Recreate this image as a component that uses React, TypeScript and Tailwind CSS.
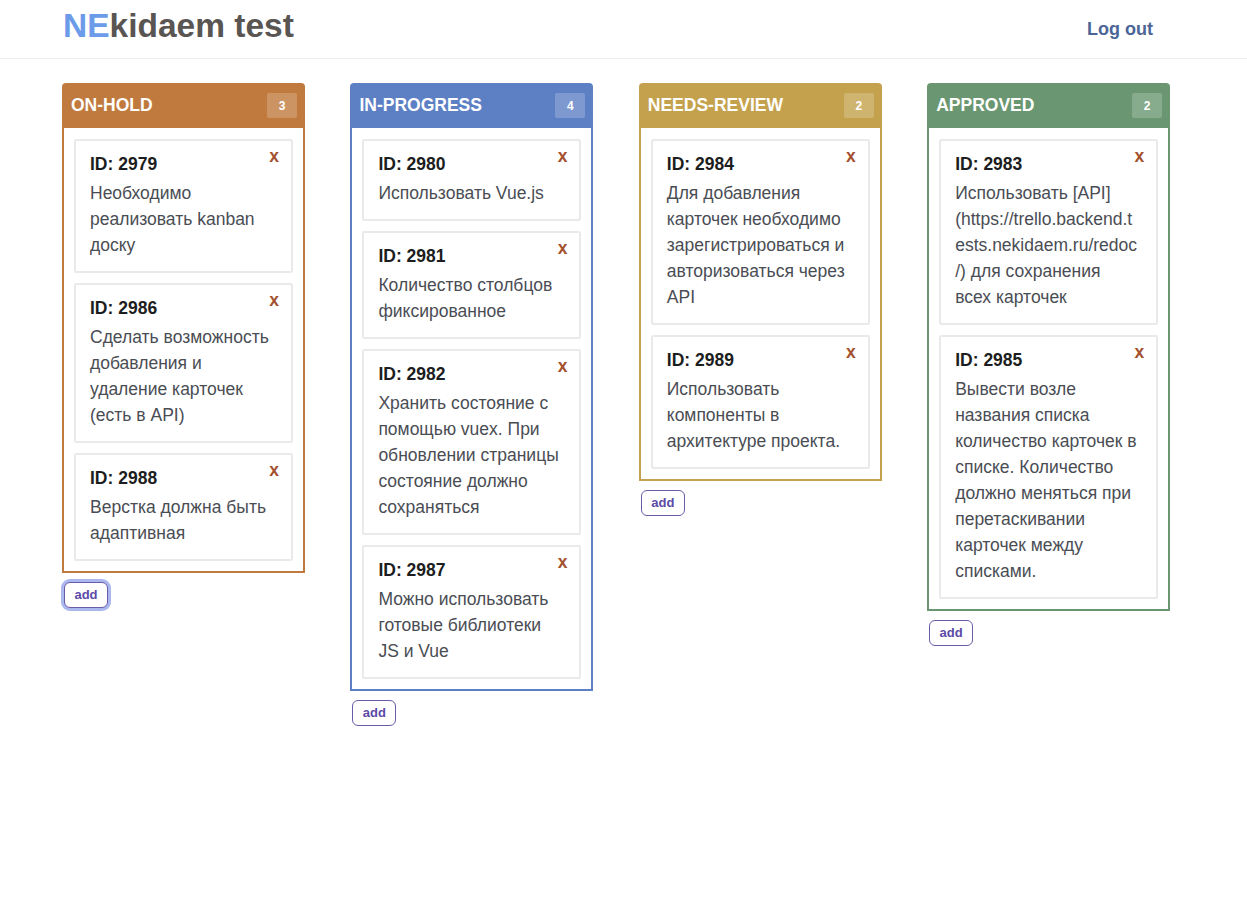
import React from 'react';

interface Card {
  id: number;
  text: string;
}

interface Column {
  title: string;
  color: string;
  cards: Card[];
}

const columns: Column[] = [
  {
    title: 'ON-HOLD',
    color: '#c07a3d',
    cards: [
      { id: 2979, text: 'Необходимо реализовать kanban доску' },
      { id: 2986, text: 'Сделать возможность добавления и удаление карточек (есть в API)' },
      { id: 2988, text: 'Верстка должна быть адаптивная' },
    ],
  },
  {
    title: 'IN-PROGRESS',
    color: '#5d80c5',
    cards: [
      { id: 2980, text: 'Использовать Vue.js' },
      { id: 2981, text: 'Количество столбцов фиксированное' },
      { id: 2982, text: 'Хранить состояние с помощью vuex. При обновлении страницы состояние должно сохраняться' },
      { id: 2987, text: 'Можно использовать готовые библиотеки JS и Vue' },
    ],
  },
  {
    title: 'NEEDS-REVIEW',
    color: '#c4a24d',
    cards: [
      { id: 2984, text: 'Для добавления карточек необходимо зарегистрироваться и авторизоваться через API' },
      { id: 2989, text: 'Использовать компоненты в архитектуре проекта.' },
    ],
  },
  {
    title: 'APPROVED',
    color: '#6a9771',
    cards: [
      { id: 2983, text: 'Использовать [API](https://trello.backend.tests.nekidaem.ru/redoc/) для сохранения всех карточек' },
      { id: 2985, text: 'Вывести возле названия списка количество карточек в списке. Количество должно меняться при перетаскивании карточек между списками.' },
    ],
  },
];

const TaskCard: React.FC<{ card: Card }> = ({ card }) => (
  <div className="relative bg-white border-2 border-[#e9eaec] rounded-[2px] pt-[10px] pb-[13px] pl-[14px] pr-[15px]">
    <button className="absolute top-[5px] right-[12px] text-[17.5px] font-bold text-[#a4512f] leading-[20px]">x</button>
    <div className="text-[17.5px] font-bold text-[#1c1d20] leading-[26px] mb-[3px]">ID: {card.id}</div>
    <div className="text-[17.5px] text-[#4a4d54] leading-[26px] break-words">{card.text}</div>
  </div>
);

const KanbanColumn: React.FC<{ column: Column; focused?: boolean }> = ({ column, focused }) => (
  <div className="flex flex-col items-start">
    <div className="w-full">
      <div
        className="h-[45px] rounded-t-[4px] flex items-center justify-between pl-[9px] pr-[8px]"
        style={{ backgroundColor: column.color }}
      >
        <span className="text-white font-bold text-[17.5px]">{column.title}</span>
        <span className="w-[30px] h-[25px] rounded-[2px] bg-white/20 text-white text-[12px] font-bold flex items-center justify-center">
          {column.cards.length}
        </span>
      </div>
      <div
        className="border-2 border-t-0 px-[10px] pt-[11px] pb-[10px] flex flex-col gap-[10px]"
        style={{ borderColor: column.color }}
      >
        {column.cards.map((c) => (
          <TaskCard key={c.id} card={c} />
        ))}
      </div>
    </div>
    <button
      className={`mt-[9px] ml-[2px] w-[44px] h-[26px] rounded-[6px] border border-[#6a5aa8] bg-white text-[#5b4aa6] text-[13px] font-bold ${
        focused ? 'ring-[3px] ring-[#aab8ee]' : ''
      }`}
    >
      add
    </button>
  </div>
);

export default function App() {
  return (
    <div className="min-h-[912px] bg-white" style={{ fontFamily: '"Liberation Sans", Arial, sans-serif' }}>
      <header className="h-[59px] border-b border-[#ececec] flex items-center justify-between pl-[63px] pr-[94px]">
        <h1 className="text-[33.5px] font-bold leading-none -mt-[7px]">
          <span className="text-[#6b9be9]">NE</span>
          <span className="text-[#595552]">kidaem test</span>
        </h1>
        <button className="text-[18px] font-bold text-[#4b6597]">Log out</button>
      </header>
      <main className="pl-[62px] pt-[24px] grid grid-cols-[repeat(4,243px)] gap-x-[45.4px] items-start">
        {columns.map((col, i) => (
          <KanbanColumn key={col.title} column={col} focused={i === 0} />
        ))}
      </main>
    </div>
  );
}
